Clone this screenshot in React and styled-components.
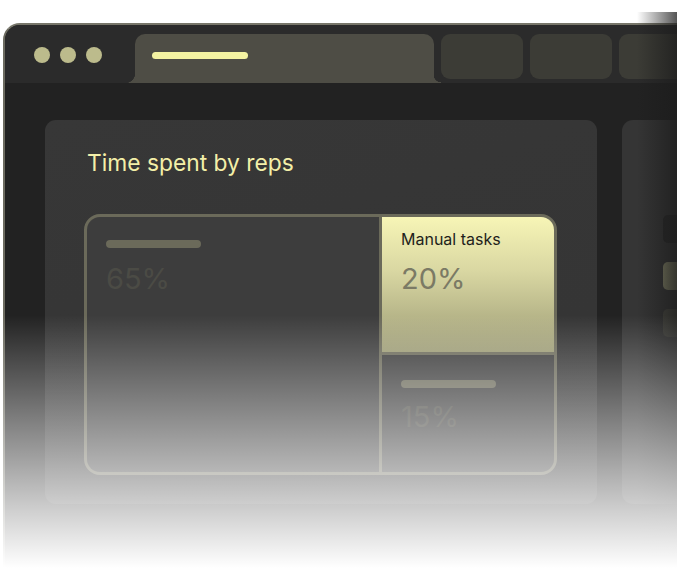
import styled, { createGlobalStyle } from "styled-components"

const GlobalStyle = createGlobalStyle`
    html, body {
        margin: 0;
        padding: 0;
        background: #ffffff;
        font-family: Inter, "Noto Sans", Arial, sans-serif;
    }
`
const Stage = styled.div`
    position: relative;
    width: 681px;
    height: 568px;
    overflow: hidden;
    background: #ffffff;
`
const Window = styled.div`
    margin: 23px 0 0 3px;
    width: 672px;
    height: 560px;
    border-top: 2px solid #77766a;
    border-left: 2px solid #6c6b60;
    border-top-left-radius: 17px;
    background: #222222;
    overflow: hidden;
`
const TitleBar = styled.div`
    display: flex;
    align-items: flex-end;
    height: 58px;
    background: #2b2b2b;
`
const Dots = styled.div`
    flex: none;
    display: flex;
    gap: 10px;
    align-self: center;
    width: 101px;
    padding: 2px 0 0 29px;
`
const Dot = styled.span`
    width: 16px;
    height: 16px;
    border-radius: 50%;
    background: #bcbb8c;
`
const ActiveTab = styled.div`
    flex: none;
    position: relative;
    width: 299px;
    height: 49px;
    background: #4e4d45;
    border-radius: 10px 10px 0 0;

    &::before, &::after {
        content: "";
        position: absolute;
        bottom: 0;
        height: 10px;
    }
    &::before {
        left: -10px;
        width: 10px;
        background: radial-gradient(circle at 0 0, transparent 10px, #4e4d45 10.5px);
    }
    &::after {
        right: -7px;
        width: 7px;
        height: 8px;
        background: radial-gradient(circle at 100% 0, transparent 7px, #4e4d45 7.5px);
    }
`
const TabLine = styled.div`
    margin: 18px 0 0 17px;
    width: 96px;
    height: 7px;
    border-radius: 4px;
    background: #f4f3a2;
`
const Tab = styled.div`
    flex: none;
    width: 82px;
    height: 45px;
    margin: 0 0 4px 7px;
    border-radius: 9px;
    background: #3c3c36;
`
const Content = styled.div`
    display: flex;
    gap: 25px;
    padding: 37px 0 0 40px;
`
const Card = styled.div`
    flex: none;
    width: 473px;
    height: 355px;
    padding: 29px 40px 0 39px;
    border-radius: 11px;
    background: linear-gradient(160deg, #373737, #343434);
`
const Title = styled.h2`
    margin: 0 0 37px 3px;
    font-size: 22.8px;
    line-height: 28px;
    font-weight: 400;
    color: #f3efa8;
`
const Chart = styled.div`
    display: grid;
    grid-template-columns: 1fr 172px;
    grid-template-rows: 135px 1fr;
    gap: 3px;
    width: 467px;
    height: 255px;
    border: 3px solid #6b6a5a;
    border-radius: 16px;
    background: #6b6a5a;
    overflow: hidden;
`
const Cell = styled.div`
    padding: ${(p) => p.$top}px 19px 0 19px;
    grid-row: ${(p) => (p.$tall ? "1 / span 2" : "auto")};
    background: ${(p) =>
        p.$highlight
            ? "linear-gradient(180deg, #f7f5b6 0%, #d9d7a2 40%, #9c9b75 100%)"
            : "#3d3d3d"};
`
const Bar = styled.div`
    width: 95px;
    height: 8px;
    border-radius: 4px;
    background: #6b6a5a;
`
const Label = styled.div`
    font-size: 16px;
    line-height: 19px;
    color: #1f1f1b;
`
const Percent = styled.div`
    margin-top: ${(p) => p.$gap}px;
    font-size: 29px;
    line-height: 36px;
    color: ${(p) => (p.$highlight ? "#7b7a65" : "#4b4b45")};
`
const SideCard = styled.div`
    flex: none;
    display: flex;
    flex-direction: column;
    gap: 19px;
    width: 200px;
    height: 384px;
    padding: 95px 0 0 41px;
    box-sizing: border-box;
    border-radius: 11px;
    background: #353535;
`
const Chip = styled.div`
    width: 40px;
    height: 28px;
    border-radius: 5px;
    background: ${(p) => p.$color};
`
const RightFade = styled.div`
    position: absolute;
    top: 12px;
    right: 4px;
    bottom: 0;
    width: 40px;
    background: linear-gradient(90deg, rgba(28, 28, 28, 0), rgba(28, 28, 28, 0.75));
    pointer-events: none;
`
const Edge = styled.div`
    position: absolute;
    top: 0;
    right: 0;
    bottom: 0;
    width: 4px;
    background: #ffffff;
`
const BottomFade = styled.div`
    position: absolute;
    left: 0;
    right: 0;
    top: 315px;
    bottom: 0;
    background: linear-gradient(180deg, rgba(255, 255, 255, 0) 0%, rgba(255, 255, 255, 0.78) 77%, #ffffff 100%);
    pointer-events: none;
`

const App = () => {
    return (
        <>
            <GlobalStyle />
            <Stage>
                <Window>
                    <TitleBar>
                        <Dots>
                            <Dot />
                            <Dot />
                            <Dot />
                        </Dots>
                        <ActiveTab>
                            <TabLine />
                        </ActiveTab>
                        <Tab />
                        <Tab />
                        <Tab />
                    </TitleBar>
                    <Content>
                        <Card>
                            <Title>Time spent by reps</Title>
                            <Chart>
                                <Cell $tall $top={23}>
                                    <Bar />
                                    <Percent $gap={13}>65%</Percent>
                                </Cell>
                                <Cell $highlight $top={13}>
                                    <Label>Manual tasks</Label>
                                    <Percent $highlight $gap={12}>20%</Percent>
                                </Cell>
                                <Cell $top={25}>
                                    <Bar />
                                    <Percent $gap={11}>15%</Percent>
                                </Cell>
                            </Chart>
                        </Card>
                        <SideCard>
                            <Chip $color="#272727" />
                            <Chip $color="linear-gradient(90deg, #8a8a6c, #6c6c58)" />
                            <Chip $color="#4a4a42" />
                        </SideCard>
                    </Content>
                </Window>
                <RightFade />
                <Edge />
                <BottomFade />
            </Stage>
        </>
    )
}

export default App
